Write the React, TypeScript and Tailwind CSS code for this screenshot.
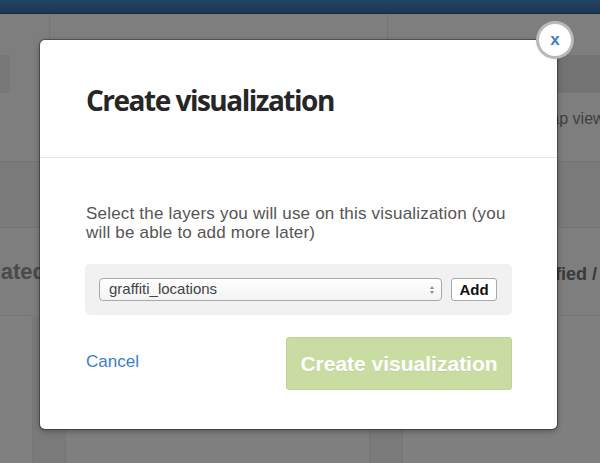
function BackgroundPage() {
  return (
    <div className="flex h-full flex-col">
      <div className="h-[14px] border-b border-[#132a41] bg-gradient-to-b from-[#244463] to-[#1b3753]" />
      <div className="grid h-[148px] grid-cols-[50px_338px_1fr] border-b border-[#747474]">
        <div className="border-r border-[#757575] pt-[41px]">
          <div className="h-[38px] w-[10px] rounded-r-[3px] bg-[#787878]" />
        </div>
        <div className="border-r border-[#757575]" />
        <div className="pt-[41px]">
          <div className="h-[38px] bg-[#737373]" />
          <p className="mt-[14px] whitespace-nowrap pl-[149px] text-[16px] text-[#3e3e3e]">
            map view
          </p>
        </div>
      </div>
      <div className="h-[66px] border-b border-[#747474] bg-[#7a7a7a]" />
      <div className="flex h-[87px] items-center whitespace-nowrap">
        <span className="-ml-[36px] text-[22px] font-bold text-[#4a4a4a]">Created</span>
        <span className="ml-[424px] pt-[6px] text-[18px] font-bold text-[#3a3a3a]">
          Last modified / Views
        </span>
      </div>
      <div className="flex flex-1">
        <div className="w-[33px] rounded-tr-[4px] border-r border-t border-[#767676] bg-[#808080]" />
        <div className="w-[32px] bg-[#7a7a7a]" />
        <div className="w-[305px] border-x border-t border-[#767676] bg-[#7f7f7f]" />
        <div className="w-[32px] bg-[#7a7a7a]" />
        <div className="flex-1 border-l border-t border-[#767676] bg-[#7f7f7f]" />
      </div>
    </div>
  );
}

function SelectArrows() {
  return (
    <svg width="6" height="12" viewBox="0 0 6 12" className="shrink-0">
      <path d="M3 2 L5 5 L1 5 Z" fill="#8a8a8a" />
      <path d="M3 10 L5 7 L1 7 Z" fill="#8a8a8a" />
    </svg>
  );
}

function Modal() {
  return (
    <div className="absolute left-[40px] top-[40px] w-[517px] rounded-[5px] bg-white shadow-[0_0_0_1px_rgba(0,0,0,0.3),0_2px_6px_rgba(0,0,0,0.35)]">
      <button className="absolute -right-[14px] -top-[16px] flex h-[32px] w-[32px] items-center justify-center rounded-full bg-white text-[17px] font-bold leading-none text-[#3a7fc1] shadow-[0_0_0_3px_#b9b9b9,0_1px_4px_rgba(0,0,0,0.35)]">
        <span className="-mt-[2px]">x</span>
      </button>

      <div className="flex h-[117px] items-center pl-[46px] pt-[2px]">
        <h1 className="font-['Open_Sans',sans-serif] text-[28px] font-bold leading-none tracking-[-1.5px] text-[#262626]">
          Create visualization
        </h1>
      </div>

      <div className="border-t border-[#e3e3e3] px-[45px] pb-[39px] pt-[46px]">
        <p className="pl-[1px] text-[17px] leading-[19px] tracking-[0.2px] text-[#555]">
          Select the layers you will use on this visualization (you will be able to add more later)
        </p>

        <div className="mt-[22px] flex h-[51px] items-center gap-[9px] rounded-[5px] bg-[#f1f1f1] pl-[14px] pr-[15px]">
          <div className="flex h-[23px] w-[343px] items-center justify-between rounded-[4px] border border-[#a9a9a9] bg-gradient-to-b from-white to-[#f3f3f3] pl-[9px] pr-[6px]">
            <span className="text-[15px] text-[#444]">graffiti_locations</span>
            <SelectArrows />
          </div>
          <button className="h-[23px] w-[46px] rounded-[3px] border border-[#a9a9a9] bg-white text-[15px] font-bold leading-none text-[#111]">
            Add
          </button>
        </div>

        <div className="mt-[22px] flex items-center justify-between">
          <a className="-mt-[3px] pl-[1px] text-[17px] text-[#3a7fc1]">Cancel</a>
          <button className="h-[53px] w-[226px] rounded-[3px] border border-[#bed497] bg-[#c9dca2] text-[21px] font-bold text-white [text-shadow:0_1px_0_rgba(0,0,0,0.06)]">
            Create visualization
          </button>
        </div>
      </div>
    </div>
  );
}

export default function App() {
  return (
    <div className="relative h-[463px] w-[600px] overflow-hidden bg-[#7e7e7e] font-['Liberation_Sans',Arial,sans-serif]">
      <BackgroundPage />
      <Modal />
    </div>
  );
}
